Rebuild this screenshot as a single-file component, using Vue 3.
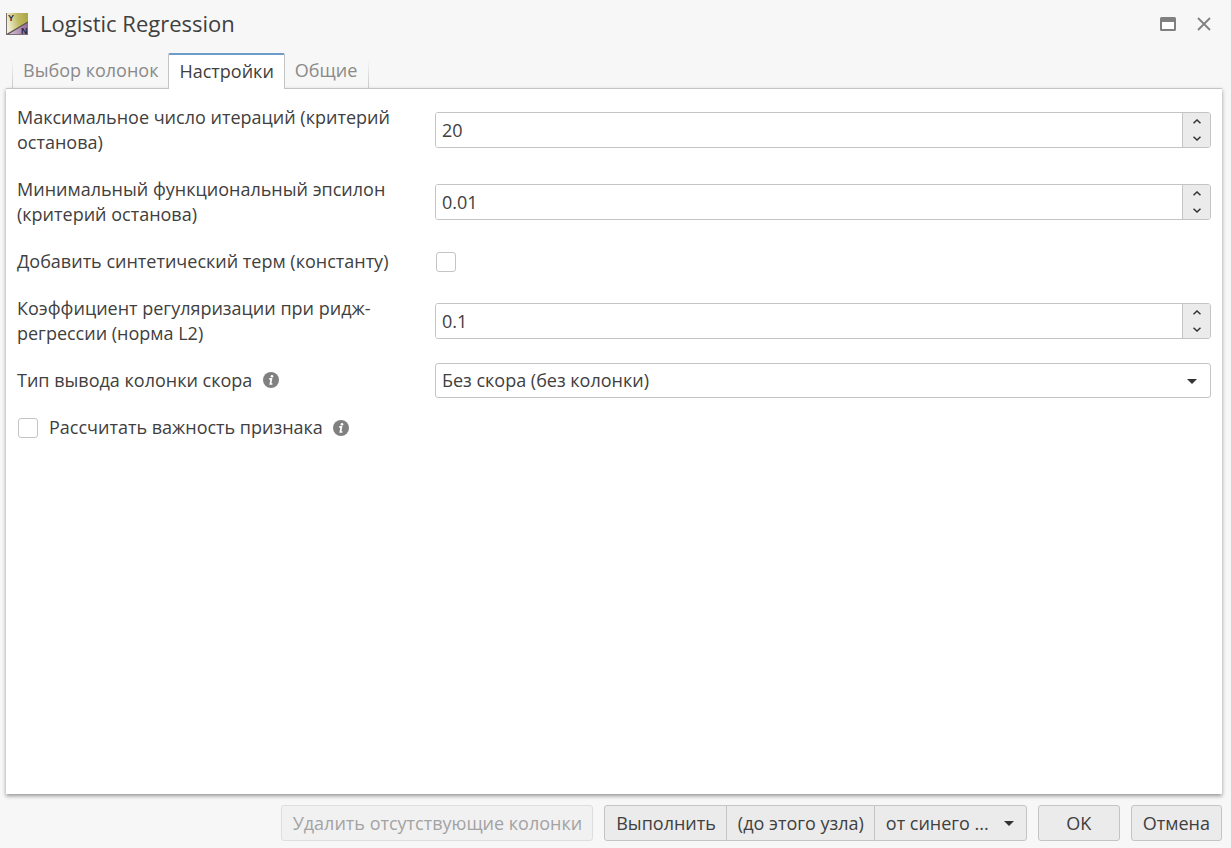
<script setup>
import { ref } from 'vue'

const tabs = ['Выбор колонок', 'Настройки', 'Общие']
const activeTab = ref('Настройки')

const fields = ref([
  { id: 'iterations', kind: 'number', label: 'Максимальное число итераций (критерий останова)', value: '20', step: 1 },
  { id: 'epsilon', kind: 'number', label: 'Минимальный функциональный эпсилон (критерий останова)', value: '0.01', step: 0.01 },
  { id: 'intercept', kind: 'check', label: 'Добавить синтетический терм (константу)', value: false },
  { id: 'ridge', kind: 'number', label: 'Коэффициент регуляризации при ридж-регрессии (норма L2)', value: '0.1', step: 0.1 },
  { id: 'score', kind: 'select', label: 'Тип вывода колонки скора', value: 'Без скора (без колонки)', info: true }
])
const importance = ref(false)

function bump(field, direction) {
  field.value = String(Number((Number(field.value) + direction * field.step).toFixed(4)))
}
</script>

<template>
  <main class="dialog">
    <header class="titlebar">
      <svg class="logo" viewBox="0 0 22 22" aria-hidden="true">
        <defs>
          <linearGradient id="gold" x1="0" x2="1" y1="0.2" y2="0">
            <stop offset="0" stop-color="#f2f0d8" />
            <stop offset="0.5" stop-color="#c2bb66" />
            <stop offset="1" stop-color="#aaa343" />
          </linearGradient>
          <linearGradient id="plum" x1="0" x2="1">
            <stop offset="0" stop-color="#e6d6e8" />
            <stop offset="1" stop-color="#916699" />
          </linearGradient>
        </defs>
        <rect width="22" height="22" fill="url(#gold)" />
        <path d="M0 22L22 9V22Z" fill="url(#plum)" />
        <path d="M0 22L22 9" stroke="#5d5550" stroke-width="1.4" />
        <path d="M0.5 0V21.5H22" fill="none" stroke="#777174" />
        <text x="2" y="8" class="logo-letter">Y</text>
        <text x="15" y="21" class="logo-letter">N</text>
      </svg>
      <h1>Logistic Regression</h1>
      <button class="window-button" type="button" aria-label="Развернуть">
        <svg width="16" height="14" viewBox="0 0 16 14">
          <rect x="1" y="1" width="14" height="12" rx="0.5" fill="#fff" stroke="#808080" stroke-width="2" />
          <path d="M1 1H15V5H1Z" fill="#808080" />
        </svg>
      </button>
      <button class="window-button" type="button" aria-label="Закрыть">
        <svg width="14" height="14" viewBox="0 0 14 14">
          <path d="M1 1L13 13M13 1L1 13" stroke="#808080" stroke-width="1.8" />
        </svg>
      </button>
    </header>

    <nav class="tabs" role="tablist">
      <button
        v-for="tab in tabs"
        :key="tab"
        type="button"
        role="tab"
        class="tab"
        :class="{ active: tab === activeTab }"
        :aria-selected="tab === activeTab"
        @click="activeTab = tab"
      >{{ tab }}</button>
    </nav>

    <section class="panel">
      <div v-for="field in fields" :key="field.id" class="row">
        <label :for="field.id" class="caption">
          {{ field.label }}
          <svg v-if="field.info" class="info" viewBox="0 0 16 16" aria-hidden="true">
            <circle cx="8" cy="8" r="8" fill="#808080" />
            <circle cx="9" cy="4.2" r="1.3" fill="#fff" />
            <path d="M6.2 6.9H8.4L7.4 12H9.4" fill="none" stroke="#fff" stroke-width="1.7" />
          </svg>
        </label>
        <div v-if="field.kind === 'number'" class="spinner">
          <input :id="field.id" v-model="field.value" type="text" inputmode="decimal" />
          <div class="steps">
            <button type="button" aria-label="Увеличить" @click="bump(field, 1)">
              <svg width="8" height="5" viewBox="0 0 8 5"><path d="M0.5 4.3L4 1L7.5 4.3" /></svg>
            </button>
            <button type="button" aria-label="Уменьшить" @click="bump(field, -1)">
              <svg width="8" height="5" viewBox="0 0 8 5"><path d="M0.5 0.7L4 4L7.5 0.7" /></svg>
            </button>
          </div>
        </div>
        <div v-else-if="field.kind === 'check'" class="check-cell">
          <input :id="field.id" v-model="field.value" type="checkbox" class="check" />
        </div>
        <div v-else class="select-cell">
          <select :id="field.id" v-model="field.value">
            <option>Без скора (без колонки)</option>
          </select>
          <svg class="select-caret" width="10" height="5" viewBox="0 0 10 5" aria-hidden="true"><path d="M0 0H10L5 5Z" fill="#333" /></svg>
        </div>
      </div>
      <div class="row">
        <label class="inline-check">
          <input v-model="importance" type="checkbox" class="check" />
          <span>Рассчитать важность признака</span>
          <svg class="info" viewBox="0 0 16 16" aria-hidden="true">
            <circle cx="8" cy="8" r="8" fill="#808080" />
            <circle cx="9" cy="4.2" r="1.3" fill="#fff" />
            <path d="M6.2 6.9H8.4L7.4 12H9.4" fill="none" stroke="#fff" stroke-width="1.7" />
          </svg>
        </label>
      </div>
    </section>

    <footer class="actions">
      <button type="button" class="btn" disabled>Удалить отсутствующие колонки</button>
      <div class="group">
        <button type="button" class="btn">Выполнить</button>
        <button type="button" class="btn">(до этого узла)</button>
        <button type="button" class="btn menu">
          <span>от синего ...</span>
          <svg width="10" height="5" viewBox="0 0 10 5" aria-hidden="true"><path d="M0 0H10L5 5Z" fill="#333" /></svg>
        </button>
      </div>
      <button type="button" class="btn ok">OK</button>
      <button type="button" class="btn">Отмена</button>
    </footer>
  </main>
</template>

<style>
body {
  background: #f7f7f7;
}
</style>

<style scoped>
.dialog,
.dialog * {
  box-sizing: border-box;
}
.dialog {
  display: flex;
  flex-direction: column;
  min-height: 100vh;
  padding: 0 9px 7px 6px;
  background: #f7f7f7;
  color: #404040;
  font: 18px/25px "Open Sans", "Noto Sans", sans-serif;
}
button,
input,
select {
  font: inherit;
  color: inherit;
  margin: 0;
}
.titlebar {
  display: flex;
  align-items: center;
  height: 48px;
  padding-right: 10px;
}
.logo {
  width: 22px;
  height: 22px;
}
.logo-letter {
  font: bold 9px "Liberation Sans", sans-serif;
  fill: #2c2730;
}
h1 {
  flex: 1;
  margin: 0 0 0 12px;
  padding-bottom: 2px;
  font-size: 22px;
  font-weight: 400;
  line-height: 30px;
}
.window-button {
  display: flex;
  align-items: center;
  justify-content: center;
  width: 22px;
  height: 22px;
  margin-left: 14px;
  padding: 0;
  border: 0;
  background: none;
}
.window-button:last-child {
  width: 16px;
  margin-left: 17px;
}
.tabs {
  display: flex;
  height: 41px;
  padding: 5px 0 0 6px;
  margin-bottom: -1px;
  z-index: 1;
}
.tab {
  padding: 0 10px 2px;
  border: 0;
  border-left: 1px solid;
  border-image: linear-gradient(transparent 20%, #c4c4c4) 1;
  background: none;
  color: #8a8a8a;
  line-height: 32px;
}
.tab:last-child {
  padding-right: 11px;
  border-right: 1px solid;
}
.tab.active + .tab {
  border-left: 0;
}
.tab.active {
  padding-bottom: 4px;
  border: 1px solid #c4c4c4;
  border-image: none;
  border-top: 2px solid #6f9bc8;
  border-bottom: 0;
  border-radius: 2px 2px 0 0;
  background: #fff;
  color: #404040;
}
.panel {
  flex: 1;
  display: flex;
  flex-direction: column;
  gap: 12px;
  padding: 11px;
  border-top: 1px solid #c4c4c4;
  background: #fff;
  box-shadow: 0 2px 4px rgba(0, 0, 0, 0.4);
}
.row {
  display: flex;
  align-items: center;
}
.caption {
  flex: 0 0 35%;
  padding: 5px 30px 5px 0;
}
.info {
  width: 16px;
  height: 16px;
  margin-left: 6px;
  vertical-align: -1px;
}
.spinner,
.select-cell,
.check-cell {
  flex: 1;
  display: flex;
  min-width: 0;
}
.spinner {
  height: 36px;
  border: 1px solid #c4c4c4;
  border-radius: 3px;
  overflow: hidden;
}
.spinner input {
  flex: 1;
  min-width: 0;
  padding: 0 6px;
  border: 0;
  outline: 0;
  background: #fff;
}
.steps {
  display: flex;
  flex-direction: column;
  width: 28px;
  border-left: 1px solid #c4c4c4;
  background: #ebebeb;
}
.steps button {
  flex: 1;
  display: flex;
  align-items: center;
  justify-content: center;
  padding: 0;
  border: 0;
  background: none;
}
.steps path {
  fill: none;
  stroke: #333;
  stroke-width: 1.5;
}
.check {
  appearance: none;
  width: 20px;
  height: 20px;
  margin: 0 1px;
  border: 1px solid #c4c4c4;
  border-radius: 3px;
  background: #fff;
}
.check:checked {
  background: #6f9bc8;
}
.inline-check {
  display: flex;
  align-items: center;
  padding: 5px 0;
}
.inline-check span {
  margin: 0 4px 0 10px;
}
.select-cell {
  position: relative;
}
select {
  appearance: none;
  width: 100%;
  height: 35px;
  padding: 0 30px 0 6px;
  border: 1px solid #c4c4c4;
  border-radius: 3px;
  background: #fff;
}
.select-caret {
  position: absolute;
  right: 14px;
  top: 16px;
  pointer-events: none;
}
.actions {
  display: flex;
  justify-content: flex-end;
  gap: 11px;
  padding-top: 11px;
}
.group {
  display: flex;
}
.btn {
  height: 36px;
  padding: 0 11px;
  border: 1px solid #c4c4c4;
  border-radius: 3px;
  background: #ebebeb;
  white-space: nowrap;
}
.btn:disabled {
  padding-right: 10px;
  border-color: #dedede;
  background: #f1f1f1;
  color: #a3a3a3;
}
.group .btn {
  padding-right: 10px;
  border-radius: 0;
}
.group .btn + .btn {
  margin-left: -1px;
}
.group .btn:first-child {
  border-radius: 3px 0 0 3px;
}
.group .btn:last-child {
  padding-right: 12px;
  border-radius: 0 3px 3px 0;
}
.menu {
  display: flex;
  align-items: center;
  gap: 15px;
}
.ok {
  width: 82px;
}
</style>
